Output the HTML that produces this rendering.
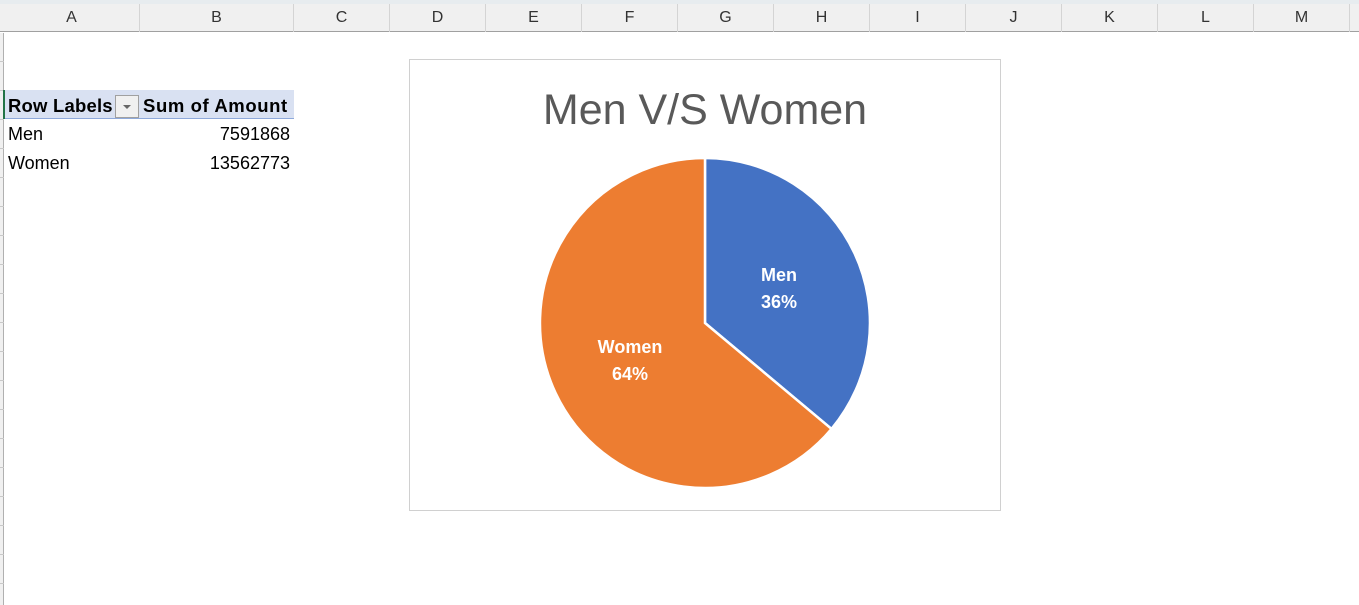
<!DOCTYPE html>
<html><head><style>
*{margin:0;padding:0;box-sizing:border-box}
body{width:1359px;height:605px;background:#fff;position:relative;overflow:hidden;font-family:"Liberation Sans",sans-serif}
.top{position:absolute;left:0;top:0;width:1359px;height:4px;background:#e7ecef}
.hdr{position:absolute;left:0;top:4px;width:1359px;height:28px;background:#f0f0f0;border-bottom:1px solid #a0a0a0}
.col{position:absolute;top:4px;height:28px;border-right:1px solid #d4d4d4;text-align:center;line-height:28px;font-size:16px;color:#333}
.left{position:absolute;left:0;top:33px;width:4px;height:572px;background:#f0f0f0;border-right:1px solid #b0b0b0}
.tick{position:absolute;left:0;width:4px;height:1px;background:#c8c8c8}
.cell{position:absolute;font-size:18px;color:#000;line-height:29px}
</style></head><body>
<div class="top"></div>
<div class="hdr"></div>
<div class="col" style="left:4px;width:136px">A</div>
<div class="col" style="left:140px;width:154px">B</div>
<div class="col" style="left:294px;width:96px">C</div>
<div class="col" style="left:390px;width:96px">D</div>
<div class="col" style="left:486px;width:96px">E</div>
<div class="col" style="left:582px;width:96px">F</div>
<div class="col" style="left:678px;width:96px">G</div>
<div class="col" style="left:774px;width:96px">H</div>
<div class="col" style="left:870px;width:96px">I</div>
<div class="col" style="left:966px;width:96px">J</div>
<div class="col" style="left:1062px;width:96px">K</div>
<div class="col" style="left:1158px;width:96px">L</div>
<div class="col" style="left:1254px;width:96px">M</div>
<div class="left"></div>
<div class="tick" style="top:61px"></div><div class="tick" style="top:90px"></div><div class="tick" style="top:119px"></div><div class="tick" style="top:148px"></div><div class="tick" style="top:177px"></div><div class="tick" style="top:206px"></div><div class="tick" style="top:235px"></div><div class="tick" style="top:264px"></div><div class="tick" style="top:293px"></div><div class="tick" style="top:322px"></div><div class="tick" style="top:351px"></div><div class="tick" style="top:380px"></div><div class="tick" style="top:409px"></div><div class="tick" style="top:438px"></div><div class="tick" style="top:467px"></div><div class="tick" style="top:496px"></div><div class="tick" style="top:525px"></div><div class="tick" style="top:554px"></div><div class="tick" style="top:583px"></div>
<div style="position:absolute;left:3px;top:90px;width:291px;height:29px;background:#d9e1f2;border-bottom:1px solid #8ea9db"></div>
<div style="position:absolute;left:3px;top:90px;width:2px;height:29px;background:#217346"></div>
<div class="cell" style="left:8px;top:91px;font-weight:bold;font-size:18.5px;letter-spacing:0.2px">Row Labels</div>
<div style="position:absolute;left:115px;top:95px;width:24px;height:23px;border:1px solid #a0a0a0;background:#f0f0f0"><div style="position:absolute;left:7px;top:9px;width:0;height:0;border-left:4px solid transparent;border-right:4px solid transparent;border-top:4px solid #666"></div></div>
<div class="cell" style="left:143px;top:91px;font-weight:bold;font-size:18.5px;letter-spacing:0.6px">Sum of Amount</div>
<div class="cell" style="left:8px;top:120px">Men</div>
<div class="cell" style="left:140px;top:120px;width:150px;text-align:right">7591868</div>
<div class="cell" style="left:8px;top:149px">Women</div>
<div class="cell" style="left:140px;top:149px;width:150px;text-align:right">13562773</div>
<div style="position:absolute;left:409px;top:59px;width:592px;height:452px;border:1px solid #d0d0d0;background:#fff"></div>
<div style="position:absolute;left:409px;top:86px;width:592px;text-align:center;font-size:43px;color:#595959">Men V/S Women</div>
<svg style="position:absolute;left:0;top:0" width="1359" height="605">
<path d="M705,323 L705,158 A165,165 0 0 1 831.5,428.9 Z" fill="#4472c4" stroke="#fff" stroke-width="2.5"/>
<path d="M705,323 L831.5,428.9 A165,165 0 1 1 705,158 Z" fill="#ed7d31" stroke="#fff" stroke-width="2.5"/>
<g fill="#fff" font-family="Liberation Sans" font-weight="bold" font-size="18" text-anchor="middle">
<text x="779" y="281">Men</text><text x="779" y="308">36%</text>
<text x="630" y="353">Women</text><text x="630" y="380">64%</text>
</g>
</svg>
</body></html>
